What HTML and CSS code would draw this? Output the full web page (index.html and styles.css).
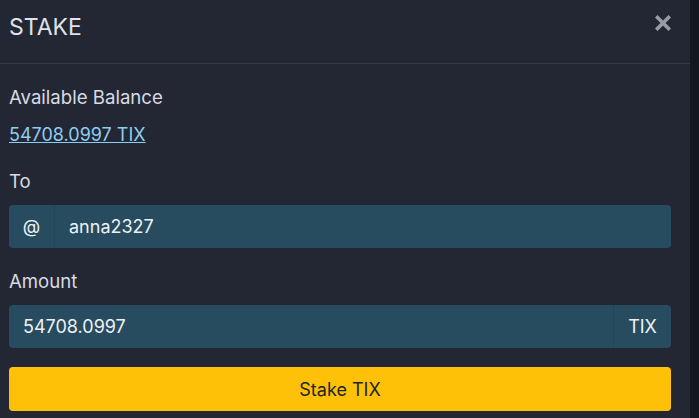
FILE: index.html
```html
<!DOCTYPE html>
<html lang="en">
<head>
    <meta charset="UTF-8">
    <meta name="viewport" content="width=device-width, initial-scale=1.0">
    <title>Stake</title>
    <link rel="stylesheet" href="styles.css">
</head>
<body>
    <div class="modal">
        <div class="modal-header">
            <h5 class="modal-title">STAKE</h5>
            <button class="close" type="button" aria-label="Close">
                <svg width="16" height="16" viewBox="0 0 16 16">
                    <path d="M2.5 2.5 L13.5 13.5 M13.5 2.5 L2.5 13.5" stroke="#9a9ca4" stroke-width="3.6" stroke-linecap="square"/>
                </svg>
            </button>
        </div>

        <div class="modal-body">
            <div class="field-label">Available Balance</div>
            <div class="balance"><a href="#">54708.0997 TIX</a></div>

            <label class="field-label" for="to">To</label>
            <div class="input-group">
                <span class="addon addon-left">@</span>
                <input type="text" id="to" value="anna2327">
            </div>

            <label class="field-label" for="amount">Amount</label>
            <div class="input-group">
                <input type="text" id="amount" value="54708.0997">
                <span class="addon addon-right">TIX</span>
            </div>

            <button class="btn-stake" type="button">Stake TIX</button>
        </div>
    </div>
</body>
</html>
```

FILE: styles.css
```css
* {
    box-sizing: border-box;
}
body {
    margin: 0;
    background-color: #131720;
    font-family: Inter, "Noto Sans", sans-serif;
    color: #d8dbe2;
    height: 418px;
    overflow: hidden;
}
.modal {
    width: 690px;
    height: 418px;
    background-color: #232733;
}
.modal-header {
    height: 64px;
    display: flex;
    justify-content: space-between;
    align-items: flex-start;
    padding: 12px 19px 0 9px;
    border-bottom: 1px solid #343a4a;
}
.modal-title {
    margin: 0;
    font-size: 23px;
    font-weight: 400;
    line-height: 30px;
    color: #dfe2e8;
}
.close {
    background: none;
    border: none;
    padding: 0;
    margin-top: 3px;
    cursor: pointer;
}
.modal-body {
    padding: 20px 19px 0 9px;
}
.field-label {
    display: block;
    font-size: 18.6px;
    line-height: 27px;
    margin-bottom: 10px;
    color: #d8dbe2;
}
.balance {
    font-size: 18px;
    line-height: 27px;
    margin-bottom: 20px;
}
.balance a {
    color: #8ecdf2;
    text-decoration: underline;
}
.input-group {
    display: flex;
    height: 43px;
    margin-bottom: 20px;
    background-color: #274c5f;
    border-radius: 4px;
}
.input-group input {
    flex: 1;
    min-width: 0;
    border: none;
    background: transparent;
    color: #eef1f4;
    font-family: inherit;
    font-size: 18px;
    padding: 0 14px;
    outline: none;
}
.addon {
    display: flex;
    align-items: center;
    justify-content: center;
    font-size: 18px;
    color: #eef1f4;
}
.addon-left {
    width: 46px;
    border-right: 1px solid #234558;
}
.addon-right {
    width: 58px;
    border-left: 1px solid #234558;
}
.btn-stake {
    display: block;
    width: 100%;
    height: 44px;
    margin-top: -1px;
    border: none;
    border-radius: 4px;
    background-color: #ffc107;
    color: #212529;
    font-family: inherit;
    font-size: 18px;
    cursor: pointer;
}
```
